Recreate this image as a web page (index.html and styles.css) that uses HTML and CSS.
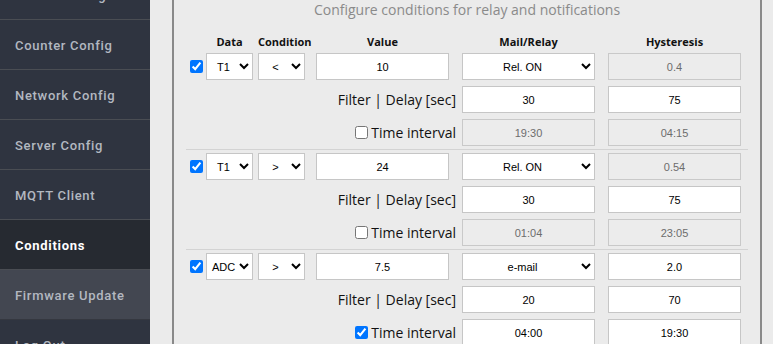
FILE: index.html
```html
<!doctype html>
<html>
  <head>
    <meta name="viewport" content="width=device-width, initial-scale=1">
    <link rel="stylesheet" href="styles.css">
    <title>Conditions</title>
  </head>
  <body>
    <div class="page">
      <nav class="side">
        <a class="item" href="#">Sensor Config</a>
        <a class="item" href="#">Counter Config</a>
        <a class="item" href="#">Network Config</a>
        <a class="item" href="#">Server Config</a>
        <a class="item" href="#">MQTT Client</a>
        <a class="item active" href="#">Conditions</a>
        <a class="item hover" href="#">Firmware Update</a>
        <a class="item" href="#">Log Out</a>
      </nav>

      <main class="main">
        <div class="box">
          <h2 class="title">Configure conditions for relay and notifications</h2>

          <div class="grid head">
            <span></span>
            <span class="h-s">Data</span>
            <span class="h-s">Condition</span>
            <span class="h-w">Value</span>
            <span class="h-w">Mail/Relay</span>
            <span class="h-w">Hysteresis</span>
          </div>

          <!-- condition 1 -->
          <div class="grid cond">
            <input type="checkbox" class="chk" checked>
            <select class="sel-s"><option>T1</option></select>
            <select class="sel-s"><option>&lt;</option></select>
            <input class="field" value="10">
            <select class="sel-w"><option>Rel. ON</option></select>
            <input class="field" value="0.4" disabled>

            <label class="lbl">Filter | Delay [sec]</label>
            <input class="field" value="30">
            <input class="field" value="75">

            <label class="lbl"><input type="checkbox" class="chk-t">Time interval</label>
            <input class="field" value="19:30" disabled>
            <input class="field" value="04:15" disabled>
          </div>

          <!-- condition 2 -->
          <div class="grid cond">
            <input type="checkbox" class="chk" checked>
            <select class="sel-s"><option>T1</option></select>
            <select class="sel-s"><option>&gt;</option></select>
            <input class="field" value="24">
            <select class="sel-w"><option>Rel. ON</option></select>
            <input class="field" value="0.54" disabled>

            <label class="lbl">Filter | Delay [sec]</label>
            <input class="field" value="30">
            <input class="field" value="75">

            <label class="lbl"><input type="checkbox" class="chk-t">Time interval</label>
            <input class="field" value="01:04" disabled>
            <input class="field" value="23:05" disabled>
          </div>

          <!-- condition 3 -->
          <div class="grid cond">
            <input type="checkbox" class="chk" checked>
            <select class="sel-s"><option>ADC</option></select>
            <select class="sel-s"><option>&gt;</option></select>
            <input class="field" value="7.5">
            <select class="sel-w"><option>e-mail</option></select>
            <input class="field" value="2.0">

            <label class="lbl">Filter | Delay [sec]</label>
            <input class="field" value="20">
            <input class="field" value="70">

            <label class="lbl"><input type="checkbox" class="chk-t" checked>Time interval</label>
            <input class="field" value="04:00">
            <input class="field" value="19:30">
          </div>
        </div>
      </main>
    </div>
  </body>
</html>
```

FILE: styles.css
```css
body {
  margin: 0;
  background: #ebebeb;
  font-family: "Open Sans", "Liberation Sans", sans-serif;
  overflow: hidden;
}

.page {
  display: flex;
  align-items: flex-start;
}

/* sidebar */
.side {
  width: 150px;
  flex: none;
  margin-top: -30px;
  background: #2f3440;
  display: flex;
  flex-direction: column;
}

.item {
  height: 49px;
  line-height: 51px;
  padding-left: 15px;
  border-bottom: 1px solid #4a4d53;
  color: #b3b8c0;
  text-decoration: none;
  font-family: Roboto, "Liberation Sans", sans-serif;
  font-size: 13px;
  font-weight: 500;
  letter-spacing: 0.7px;
}

.item.active {
  background: #262a31;
  color: #fff;
  font-weight: bold;
}

.item.hover {
  background: #434751;
  border-bottom-color: #353840;
}

/* content */
.main {
  flex: 1;
  padding-left: 22px;
}

.box {
  width: 586px;
  height: 400px;
  border-left: 2px solid #898989;
  border-right: 2px solid #898989;
}

.title {
  margin: 0;
  height: 20px;
  line-height: 19px;
  font-size: 14px;
  font-weight: normal;
  color: #8a8a8a;
  text-align: center;
}

.grid {
  display: grid;
  grid-template-columns: 16px 52px 58px 146px 146px 133px;
  margin: 0 12px;
  padding-left: 4px;
}

.head {
  margin-top: 12px;
  height: 18px;
  align-items: center;
  font-size: 11px;
  font-weight: bold;
  color: #111;
}

.h-s { width: 47px; text-align: center; }
.h-w { width: 133px; text-align: center; }

.cond {
  row-gap: 6px;
  padding-top: 3px;
  padding-bottom: 3px;
  border-bottom: 1px solid #d3d3d3;
}

.chk {
  margin: 0;
  width: 13px;
  height: 13px;
  align-self: center;
}

.field,
.sel-s,
.sel-w {
  box-sizing: border-box;
  height: 27px;
  margin: 0;
  border: 1px solid #c6c6c6;
  border-radius: 0;
  background: #fff;
  font-family: "Liberation Sans", Arial, sans-serif;
  font-size: 11px;
  color: #000;
  text-align: center;
  text-align-last: center;
  outline: none;
}

.field { width: 133px; }
.sel-s { width: 47px; }
.sel-w { width: 133px; }

.field:disabled {
  background: #ececec;
  color: #6d6d6d;
  border-color: #c9c9c9;
}

.lbl {
  grid-column: 1 / 5;
  justify-self: end;
  padding-right: 6px;
  display: flex;
  align-items: center;
  font-size: 14px;
  color: #111;
}

.chk-t {
  margin: 0 3px 0 0;
  width: 13px;
  height: 13px;
}
```
